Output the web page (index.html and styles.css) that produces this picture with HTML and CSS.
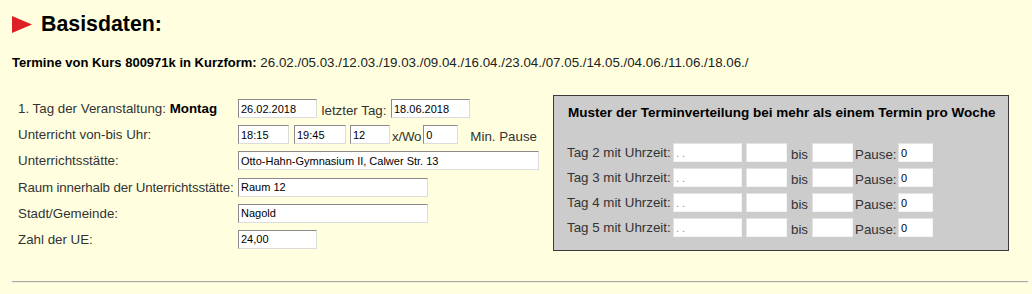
FILE: index.html
```html
<!DOCTYPE html>
<html lang="de">
<head>
<meta charset="utf-8">
<link rel="stylesheet" href="styles.css">
</head>
<body>
<div class="head">
  <svg class="arrow" width="20" height="17" viewBox="0 0 20 17"><polygon points="0,0 20,8.5 0,17" fill="#dd1f26"/></svg>
  <h1>Basisdaten:</h1>
</div>
<p class="terms"><strong>Termine von Kurs 800971k in Kurzform:</strong> 26.02./05.03./12.03./19.03./09.04./16.04./23.04./07.05./14.05./04.06./11.06./18.06./</p>

<div class="form">
  <div class="fields">
    <div class="lbl">1. Tag der Veranstaltung: <b>Montag</b></div>
    <div class="val">
      <input class="w79" type="text" value="26.02.2018">
      <span class="txt t1">letzter Tag:</span>
      <input class="w79" type="text" value="18.06.2018">
    </div>

    <div class="lbl">Unterricht von-bis Uhr:</div>
    <div class="val">
      <input class="w51" type="text" value="18:15">
      <input class="w52 ml5" type="text" value="19:45">
      <input class="w40 ml4" type="text" value="12">
      <span class="txt t2">x/Wo</span>
      <input class="w35" type="text" value="0">
      <span class="txt t3">Min. Pause</span>
    </div>

    <div class="lbl">Unterrichtsstätte:</div>
    <div class="val"><input class="w300" type="text" value="Otto-Hahn-Gymnasium II, Calwer Str. 13"></div>

    <div class="lbl tight">Raum innerhalb der Unterrichtsstätte:</div>
    <div class="val"><input class="w190" type="text" value="Raum 12"></div>

    <div class="lbl">Stadt/Gemeinde:</div>
    <div class="val"><input class="w190" type="text" value="Nagold"></div>

    <div class="lbl">Zahl der UE:</div>
    <div class="val"><input class="w79" type="text" value="24,00"></div>
  </div>

  <div class="pattern">
    <div class="pattern-title">Muster der Terminverteilung bei mehr als einem Termin pro Woche</div>
    <div class="tag-rows">
      <div class="tag-row">
        <span class="tag-lbl">Tag 2 mit Uhrzeit:</span>
        <input class="w69 dots" type="text" value=". .">
        <input class="w41 ml4" type="text" value="">
        <span class="txt bis">bis</span>
        <input class="w41" type="text" value="">
        <span class="txt pause">Pause:</span>
        <input class="w35" type="text" value="0">
      </div>
      <div class="tag-row">
        <span class="tag-lbl">Tag 3 mit Uhrzeit:</span>
        <input class="w69 dots" type="text" value=". .">
        <input class="w41 ml4" type="text" value="">
        <span class="txt bis">bis</span>
        <input class="w41" type="text" value="">
        <span class="txt pause">Pause:</span>
        <input class="w35" type="text" value="0">
      </div>
      <div class="tag-row">
        <span class="tag-lbl">Tag 4 mit Uhrzeit:</span>
        <input class="w69 dots" type="text" value=". .">
        <input class="w41 ml4" type="text" value="">
        <span class="txt bis">bis</span>
        <input class="w41" type="text" value="">
        <span class="txt pause">Pause:</span>
        <input class="w35" type="text" value="0">
      </div>
      <div class="tag-row">
        <span class="tag-lbl">Tag 5 mit Uhrzeit:</span>
        <input class="w69 dots" type="text" value=". .">
        <input class="w41 ml4" type="text" value="">
        <span class="txt bis">bis</span>
        <input class="w41" type="text" value="">
        <span class="txt pause">Pause:</span>
        <input class="w35" type="text" value="0">
      </div>
    </div>
  </div>
</div>
<hr class="divider">
</body>
</html>
```

FILE: styles.css
```css
* {
  box-sizing: border-box;
}
body {
  margin: 0;
  padding: 12px 4px 0 12px;
  background-color: #ffffe0;
  color: #333333;
  font-family: "Liberation Sans", Arial, sans-serif;
  font-size: 13.33px;
}
.head {
  display: flex;
  align-items: center;
  gap: 9px;
  height: 24px;
}
.arrow {
  display: block;
}
h1 {
  margin: 0;
  font-size: 21.33px;
  line-height: 24px;
  font-weight: bold;
  color: #000;
}
.terms {
  margin: 19px 0 0;
  line-height: 15px;
  color: #222;
}
.terms strong {
  font-size: 13px;
  color: #000;
}
.form {
  display: flex;
  align-items: flex-start;
  margin-top: 25px;
}
.fields {
  flex: 0 0 541px;
  display: grid;
  grid-template-columns: 220px auto;
  grid-auto-rows: 19px;
  row-gap: 7.2px;
  padding: 4px 0 0 6px;
}
.lbl {
  align-self: center;
  line-height: 15px;
  white-space: nowrap;
}
.lbl b {
  color: #000;
}
.tight {
  letter-spacing: -0.16px;
}
.val {
  display: flex;
  align-items: center;
}
input {
  height: 19px;
  margin: 0;
  padding: 1px 2px;
  font-family: "Liberation Sans", Arial, sans-serif;
  font-size: 11px;
  color: #000;
  background: #fff;
  border: 1px solid;
  border-color: #8a8a8a #dcdcdc #dcdcdc #8a8a8a;
  outline: none;
}
.w79 { width: 79px; }
.w51 { width: 51px; }
.w52 { width: 52px; }
.w40 { width: 40px; }
.w35 { width: 35px; }
.w300 { width: 301px; }
.w190 { width: 190px; }
.w69 { width: 69px; }
.w41 { width: 41px; }
.ml5 { margin-left: 5px; }
.ml4 { margin-left: 4px; }
.txt {
  line-height: 15px;
  white-space: nowrap;
}
.t1 { margin: 3px 0 0 0; width: 74px; text-align: center; }
.t2 { margin: 3px 2px 0 2px; letter-spacing: -0.2px; }
.t3 { margin: 3px 0 0 12px; }
.pattern {
  flex: 0 0 456px;
  background: #cccccc;
  border: 1px solid #3a3a3a;
  padding: 9px 10px 13px 12px;
}
.pattern-title {
  font-weight: bold;
  font-size: 13.5px;
  color: #000;
  line-height: 15px;
  padding-left: 2px;
  white-space: nowrap;
}
.tag-rows {
  display: flex;
  flex-direction: column;
  gap: 6px;
  margin-top: 23px;
}
.tag-row {
  display: flex;
  align-items: center;
  height: 19px;
}
.tag-row input {
  border-color: #e2e2e2 #f4f4f4 #f4f4f4 #e2e2e2;
}
.tag-lbl {
  width: 107px;
  padding-left: 1px;
  line-height: 15px;
  white-space: nowrap;
}
.dots {
  color: #888;
}
.bis { margin: 3px 0 0 0; width: 25px; text-align: center; }
.pause { margin: 3px 0 0 2px; width: 43px; }
.divider {
  margin: 30px 0 0;
  border: 0;
  border-top: 1px solid #a8a8a8;
  border-bottom: 1px solid #f0f0d8;
}
```
